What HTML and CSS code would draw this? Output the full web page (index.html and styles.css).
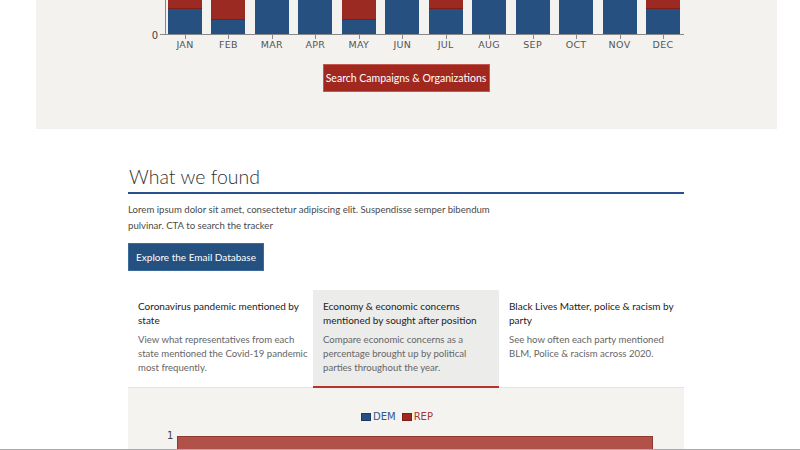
FILE: index.html
```html
<!DOCTYPE html>
<html>
<head>
<meta charset="utf-8">
<link rel="stylesheet" href="styles.css">
</head>
<body>
<section class="top">
  <div class="chart">
    <div class="ycol"><span class="zero">0</span></div>
    <div class="plotcol">
      <div class="plot">
        <div class="bar"><i class="rep" style="height:8px"></i><i class="dem"></i></div>
        <div class="bar"><i class="rep" style="height:19px"></i><i class="dem"></i></div>
        <div class="bar"><i class="dem"></i></div>
        <div class="bar"><i class="dem"></i></div>
        <div class="bar"><i class="rep" style="height:19px"></i><i class="dem"></i></div>
        <div class="bar"><i class="dem"></i></div>
        <div class="bar"><i class="rep" style="height:8px"></i><i class="dem"></i></div>
        <div class="bar"><i class="dem"></i></div>
        <div class="bar"><i class="dem"></i></div>
        <div class="bar"><i class="dem"></i></div>
        <div class="bar"><i class="dem"></i></div>
        <div class="bar"><i class="rep" style="height:8px"></i><i class="dem"></i></div>
      </div>
      <div class="months">
        <span>JAN</span><span>FEB</span><span>MAR</span><span>APR</span><span>MAY</span><span>JUN</span>
        <span>JUL</span><span>AUG</span><span>SEP</span><span>OCT</span><span>NOV</span><span>DEC</span>
      </div>
    </div>
  </div>
  <div class="btnrow"><a class="btn btn-red">Search Campaigns &amp; Organizations</a></div>
</section>

<section class="found">
  <h2 class="title">What we found</h2>
  <p class="lead">Lorem ipsum dolor sit amet, consectetur adipiscing elit. Suspendisse semper bibendum pulvinar. CTA to search the tracker</p>
  <a class="btn btn-blue">Explore the Email Database</a>

  <div class="tabs">
    <div class="tab">
      <h3>Coronavirus pandemic mentioned by state</h3>
      <p>View what representatives from each state mentioned the Covid-19 pandemic most frequently.</p>
    </div>
    <div class="tab active">
      <h3>Economy &amp; economic concerns mentioned by sought after position</h3>
      <p>Compare economic concerns as a percentage brought up by political parties throughout the year.</p>
    </div>
    <div class="tab">
      <h3>Black Lives Matter, police &amp; racism by party</h3>
      <p>See how often each party mentioned BLM, Police &amp; racism across 2020.</p>
    </div>
  </div>

  <div class="panel">
    <div class="legend">
      <span class="key"><i class="sw sw-dem"></i>DEM</span>
      <span class="key rep-key"><i class="sw sw-rep"></i>REP</span>
    </div>
    <div class="chart2">
      <span class="one">1</span>
      <div class="bigbar"></div>
    </div>
  </div>
</section>
<div class="edge"></div>
</body>
</html>
```
FILE: styles.css
```css
html, body { margin: 0; padding: 0; }
body {
  background: #ffffff;
  font-family: "Lato", "Open Sans", sans-serif;
  color: #333;
  width: 800px;
  height: 450px;
  overflow: hidden;
  position: relative;
}

.top {
  margin-left: 36px;
  width: 741px;
  height: 129px;
  background: #f4f2ee;
}

.chart {
  display: flex;
  margin-left: 92px;
  width: 556px;
}
.ycol {
  width: 37px;
  height: 35px;
  position: relative;
}
.zero {
  position: absolute;
  right: 7px;
  bottom: -6px;
  font-family: "DejaVu Sans", sans-serif;
  font-size: 10px;
  color: #444;
}
.ycol::after {
  content: "";
  position: absolute;
  right: 0;
  bottom: 0;
  width: 5px;
  height: 1px;
  background: #888;
}
.plotcol { width: 519px; }
.plot {
  height: 35px;
  border-left: 1px solid #888;
  border-bottom: 1px solid #888;
  display: flex;
  justify-content: space-between;
  padding: 0 4px 0 2px;
  box-sizing: border-box;
}
.bar {
  width: 34px;
  display: flex;
  flex-direction: column;
  position: relative;
}
.bar::after {
  content: "";
  position: absolute;
  left: 17px;
  bottom: -5px;
  width: 1px;
  height: 4px;
  background: #888;
}
.bar i { display: block; }
.bar .rep { background: #9b2b22; border-bottom: 1px solid #7d1f18; }
.bar .dem { background: #25507f; flex: 1; }

.months {
  display: flex;
  justify-content: space-between;
  padding: 4px 4px 0 3px;
  box-sizing: border-box;
}
.months span {
  width: 34px;
  text-align: center;
  font-family: "DejaVu Sans", sans-serif;
  font-size: 9.5px;
  letter-spacing: 0.3px;
  color: #555;
}

.btnrow {
  display: flex;
  justify-content: center;
  padding-top: 14px;
  margin-left: -1px;
}
.btn {
  display: inline-block;
  color: #fff;
  font-size: 10.5px;
  text-decoration: none;
  box-sizing: border-box;
}
.btn-red {
  background: #a1281f;
  border: 1px solid #c5584f;
  width: 167px;
  height: 28px;
  line-height: 26px;
  text-align: center;
}

.found {
  width: 556px;
  margin: 0 auto 0 128px;
  padding-top: 36px;
}
.title {
  margin: 0;
  font-weight: 300;
  font-size: 19.5px;
  line-height: 24px;
  color: #333;
  padding-left: 1px;
  padding-bottom: 3px;
  border-bottom: 2px solid #27508c;
}
.lead {
  margin: 8px 0 0 0;
  font-size: 9.6px;
  line-height: 16px;
  color: #4a4a4a;
  width: 375px;
}
.btn-blue {
  margin-top: 9px;
  background: #24517f;
  border: 1px solid #3b6a9c;
  width: 136px;
  height: 28px;
  line-height: 26px;
  text-align: center;
  font-size: 10px;
}

.tabs {
  display: grid;
  grid-template-columns: 185px 186px 185px;
  margin-top: 19px;
}
.tab {
  padding: 9px 2px 11px 10px;
  border-bottom: 1px solid #e8e2dc;
}
.tab.active {
  background: #ececeb;
  border-bottom: 2px solid #b8332b;
}
.tab h3 {
  margin: 0;
  font-size: 10px;
  font-weight: 400;
  line-height: 14px;
  color: #222;
}
.tab p {
  margin: 6px 0 0 0;
  font-size: 9.6px;
  line-height: 14px;
  color: #666;
}

.panel {
  background: #f5f3ef;
  height: 70px;
  padding-top: 23px;
  box-sizing: border-box;
}
.legend {
  display: flex;
  justify-content: center;
  gap: 6px;
  font-family: "DejaVu Sans", sans-serif;
  font-size: 10px;
  line-height: 12px;
  margin-right: 18px;
}
.key { display: flex; align-items: center; color: #2b5a8c; }
.rep-key { color: #a33a30; }
.sw { display: inline-block; width: 8px; height: 6px; margin-right: 2px; }
.sw-dem { background: #25507f; border: 1px solid #1b3d63; }
.sw-rep { background: #a1281f; border: 1px solid #7d1f18; }

.chart2 {
  display: flex;
  align-items: flex-start;
  margin-top: 13px;
  padding-left: 39px;
  position: relative;
}
.one {
  font-family: "DejaVu Sans", sans-serif;
  font-size: 10px;
  color: #444;
  line-height: 10px;
  margin-top: -5px;
  margin-right: 3px;
}
.bigbar {
  width: 476px;
  height: 20px;
  margin-left: 1px;
  background: #b25148;
  border: 1px solid #8e3a32;
  box-sizing: border-box;
}

.edge {
  position: absolute;
  left: 0;
  bottom: 0;
  width: 800px;
  height: 1px;
  background: #aaaaaa;
}
```
